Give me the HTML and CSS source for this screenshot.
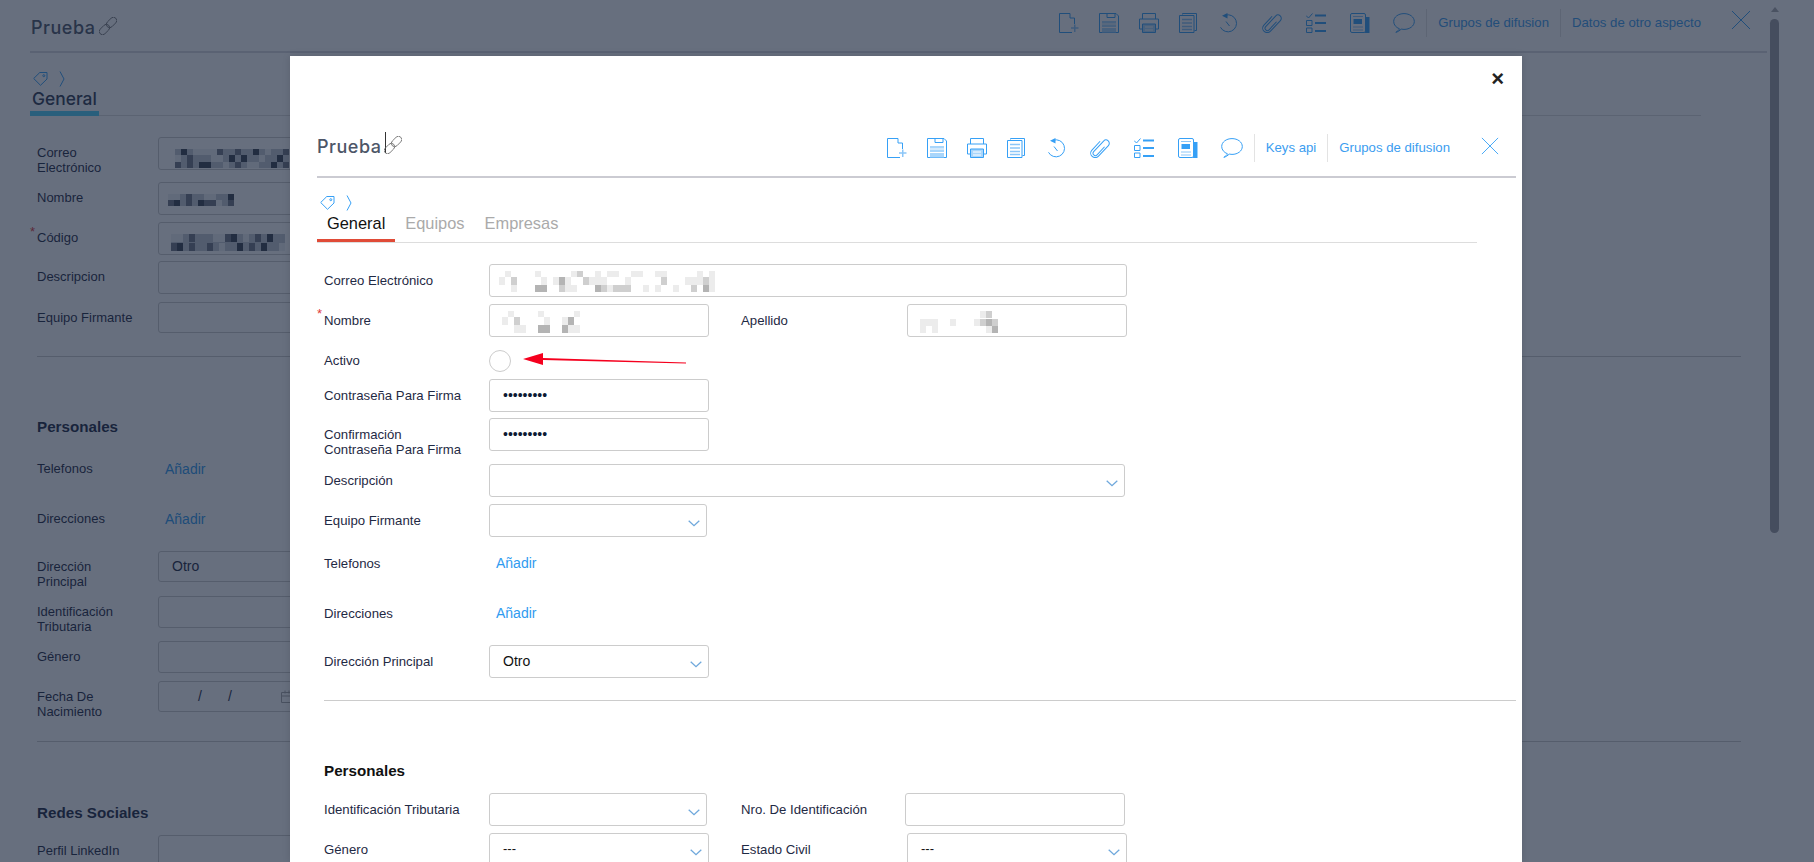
FILE: index.html
```html
<!doctype html>
<html lang="es">
  <head>
    <meta charset="UTF-8" />
    <title>Prueba</title>
    <link rel="stylesheet" href="styles.css">
  </head>
  <body>
    <svg class="defs" width="0" height="0">
      <symbol id="i-new" viewBox="0 0 20 20">
        <path d="M11 .5H.5v19H13M11 .5V5h4.500v6"/>
        <path class="soft" d="M12 15h7.500M15.750 11.500v7.500" stroke-width="1.500"/>
      </symbol>
      <symbol id="i-save" viewBox="0 0 20 20">
        <path d="M.5.5H17L19.500 3v16.500H.5z"/>
        <path d="M8 .5v4h8V.5"/>
        <rect class="fill" x="3" y="8" width="14" height="11.500"/>
        <path class="white" d="M3 11h14M3 14.500h14"/>
      </symbol>
      <symbol id="i-print" viewBox="0 0 20 20">
        <path d="M3.500 6V.5h13V6M.5 6h19v10h-3M3.500 16h-3V6"/>
        <rect class="fill" x="3.500" y="11" width="13" height="8.500"/>
        <path d="M3.500 11h13v8.500h-13z"/>
        <path class="white" d="M6 14h8M6 17h8"/>
      </symbol>
      <symbol id="i-copy" viewBox="0 0 20 20">
        <path d="M3.500 1.500V.5h14v17h-2"/>
        <path d="M.5 2.500h14.500v17H.5z"/>
        <path class="soft" d="M3 6.500h10M3 10h10M3 13.500h10M3 16.500h10" stroke-width="1.300"/>
      </symbol>
      <symbol id="i-history" viewBox="0 0 23 20">
        <path d="M6.500 2.200A8.500 8.500 0 1 1 1.500 14.300"/>
        <path class="solid" d="M3 2.800 8.500 0v5.500z"/>
        <path d="M7 8.500l3.500 4.500"/>
      </symbol>
      <symbol id="i-clip" viewBox="0 0 24 20">
        <g transform="rotate(43 10 10)">
          <path d="M10.500 5v11a2.300 2.300 0 0 1-4.600 0V1.500a3.300 3.300 0 0 1 6.600 0V16a4.500 4.500 0 0 1-9 0V4" transform="translate(2 1)"/>
        </g>
      </symbol>
      <symbol id="i-list" viewBox="0 0 24 20">
        <path d="M0 2.500 2.500 5 6.500.5"/>
        <path d="M.5 7.500h5.500v5H.5zM.5 15h5.500v4.500H.5z"/>
        <path d="M9 2.500h11M9 10h11M9 18h11" stroke-width="2"/>
      </symbol>
      <symbol id="i-news" viewBox="0 0 23 20">
        <path class="solid" d="M15 4h4.500v16H15z"/>
        <rect x=".5" y=".5" width="15" height="19" rx="1.500" fill="#fff"/>
        <path class="solid" d="M3.500 6h8.500v5H3.500z"/>
        <path class="soft" d="M3 3.500h10M3 14h10M3 17h10"/>
      </symbol>
      <symbol id="i-chat" viewBox="0 0 23 20">
        <path d="M6.500 15.800C3 14.500.7 11.800.7 8.500.7 4 5.300.6 11 .6s10.300 3.400 10.300 7.900-4.600 7.900-10.300 7.900c-1 0-1.900-.1-2.800-.3C6.800 17.500 5 18.800 2.800 19.300c1.800-1 3.200-2.300 3.700-3.500z"/>
      </symbol>
      <symbol id="i-close" viewBox="0 0 20 20">
        <path d="M1 1l18 18M19 1L1 19"/>
      </symbol>
      <symbol id="i-link" viewBox="0 0 18 18">
        <g transform="rotate(-45 9 9)">
          <rect x="-2" y="5.700" width="12" height="6.600" rx="3.300"/>
          <rect x="8" y="5.700" width="12" height="6.600" rx="3.300"/>
        </g>
      </symbol>
      <symbol id="i-tag" viewBox="0 0 15 15">
        <path d="M.7 7.500 6.800 1.500H14V8l-6.500 6.300z"/>
        <circle cx="10.800" cy="4.700" r="1"/>
      </symbol>
      <symbol id="i-chevron" viewBox="0 0 6 16">
        <path d="M1 .5 5 8l-4 7.500"/>
      </symbol>
      <symbol id="i-down" viewBox="0 0 12 7">
        <path d="M.7.7 6 5.700l5.300-5"/>
      </symbol>
    </svg>

    <div class="page">
      <div class="head head-page">
        <div class="title title-page">Prueba <svg class="ic-link"><use href="#i-link"/></svg></div>
        <div class="tools">
          <svg class="tool"><use href="#i-new"/></svg>
          <svg class="tool"><use href="#i-save"/></svg>
          <svg class="tool"><use href="#i-print"/></svg>
          <svg class="tool"><use href="#i-copy"/></svg>
          <svg class="tool w23"><use href="#i-history"/></svg>
          <svg class="tool w24"><use href="#i-clip"/></svg>
          <svg class="tool w24"><use href="#i-list"/></svg>
          <svg class="tool w23"><use href="#i-news"/></svg>
          <svg class="tool w23 tool-last"><use href="#i-chat"/></svg>
          <a class="tool-link">Grupos de difusion</a>
          <a class="tool-link">Datos de otro aspecto</a>
          <svg class="ic-close ic-close-page"><use href="#i-close"/></svg>
        </div>
      </div>
      <div class="crumb crumb-page">
        <svg class="ic-tag"><use href="#i-tag"/></svg>
        <svg class="ic-chevron"><use href="#i-chevron"/></svg>
      </div>
      <div class="tabs-page"><span class="tab-page">General</span></div>

      <div class="bg-form">
        <div class="bg-row h33 mb12">
          <label>Correo<br>Electrónico</label>
          <div class="bg-field">
            <svg class="mosaic" width="114" height="20">
              <rect width="114" height="19" fill="#c4c9d0"/>
              <path fill="#3b4250" d="M6 0h6v6H6zM78 0h6v6h-6zM54 6h6v7h-6zM66 6h6v7h-6zM102 6h6v7h-6zM24 13h12v6H24zM96 13h6v6h-6z"/>
              <path fill="#eef0f2" d="M0 6h6v7H0zM18 0h24v6H18zM36 6h12v7H36zM90 0h6v6h-6zM84 6h6v7h-6zM48 13h6v6h-6zM72 13h12v6H72z"/>
              <path fill="#707784" d="M12 6h6v7h-6zM0 13h6v6H0zM42 0h6v6h-6zM60 0h6v6h-6zM108 0h6v6h-6zM12 13h6v6h-6zM60 13h6v6h-6zM108 13h6v6h-6z"/>
            </svg>
          </div>
        </div>
        <div class="bg-row h33 mb7">
          <label>Nombre</label>
          <div class="bg-field">
            <svg class="mosaic mosaic-short" width="66" height="12">
              <rect width="66" height="12" fill="#c4c9d0"/>
              <path fill="#eef0f2" d="M0 0h12v6H0zM36 0h12v6H36zM48 6h6v6h-6z"/>
              <path fill="#707784" d="M18 0h6v6h-6zM0 6h6v6H0zM18 6h6v6h-6zM36 6h12v6H36zM60 6h6v6h-6z"/>
              <path fill="#3b4250" d="M60 0h6v6h-6zM6 6h6v6H6zM30 6h6v6h-6z"/>
            </svg>
          </div>
        </div>
        <div class="bg-row h33 mb6">
          <label class="req"><i>*</i>Código</label>
          <div class="bg-field">
            <svg class="mosaic mosaic-mid" width="114" height="17">
              <rect width="114" height="17" fill="#c4c9d0"/>
              <path fill="#eef0f2" d="M0 0h12v8H0zM42 0h12v8H42zM72 0h6v8h-6zM48 9h6v8h-6zM108 9h6v8h-6z"/>
              <path fill="#3b4250" d="M60 0h6v8h-6zM96 0h6v8h-6zM6 9h6v8H6zM66 9h6v8h-6zM90 9h6v8h-6z"/>
              <path fill="#707784" d="M18 0h6v8h-6zM54 0h6v8h-6zM84 0h6v8h-6zM0 9h6v8H0zM18 9h6v8h-6zM36 9h6v8h-6zM78 9h6v8h-6z"/>
            </svg>
          </div>
        </div>
        <div class="bg-row h33 mb8"><label>Descripcion</label><div class="bg-field"></div></div>
        <div class="bg-row h31"><label>Equipo Firmante</label><div class="bg-field"></div></div>
        <div class="bg-hr first-hr"></div>
        <h3 class="bg-head first-head">Personales</h3>
        <div class="bg-row h32 mb18"><label>Telefonos</label><a>Añadir</a></div>
        <div class="bg-row h32 mb16"><label>Direcciones</label><a>Añadir</a></div>
        <div class="bg-row h31 mb14"><label>Dirección<br>Principal</label><div class="bg-field bg-text">Otro</div></div>
        <div class="bg-row h32 mb13"><label>Identificación<br>Tributaria</label><div class="bg-field"></div></div>
        <div class="bg-row h32 mb8"><label>Género</label><div class="bg-field"></div></div>
        <div class="bg-row h31">
          <label>Fecha De<br>Nacimiento</label>
          <div class="bg-field bg-text bg-date">
            <span>/</span><span>/</span>
            <svg class="ic-cal" width="12" height="13"><path d="M.5 2.500h11v10H.5zM.5 6h11M4 .5v3M8 .5v3"/></svg>
          </div>
        </div>
        <div class="bg-hr second-hr"></div>
        <h3 class="bg-head">Redes Sociales</h3>
        <div class="bg-row h31"><label>Perfil LinkedIn</label><div class="bg-field"></div></div>
      </div>
    </div>

    <div class="backdrop"></div>
    <div class="scrollbar"><span class="scroll-arrow"></span><span class="scroll-thumb"></span></div>

    <div class="modal">
      <div class="modal-close">×</div>
      <div class="head">
        <div class="title">Prueba <span class="caret"></span><svg class="ic-link"><use href="#i-link"/></svg></div>
        <div class="tools">
          <svg class="tool"><use href="#i-new"/></svg>
          <svg class="tool"><use href="#i-save"/></svg>
          <svg class="tool"><use href="#i-print"/></svg>
          <svg class="tool"><use href="#i-copy"/></svg>
          <svg class="tool w23"><use href="#i-history"/></svg>
          <svg class="tool w24"><use href="#i-clip"/></svg>
          <svg class="tool w24"><use href="#i-list"/></svg>
          <svg class="tool w23"><use href="#i-news"/></svg>
          <svg class="tool w23 tool-last"><use href="#i-chat"/></svg>
          <a class="tool-link">Keys api</a>
          <a class="tool-link">Grupos de difusion</a>
          <svg class="ic-close"><use href="#i-close"/></svg>
        </div>
      </div>
      <div class="crumb">
        <svg class="ic-tag"><use href="#i-tag"/></svg>
        <svg class="ic-chevron"><use href="#i-chevron"/></svg>
      </div>
      <div class="tabs">
        <span class="tab active">General</span>
        <span class="tab">Equipos</span>
        <span class="tab">Empresas</span>
      </div>

      <div class="form">
        <div class="row">
          <label>Correo Electrónico</label>
          <div class="field w638">
            <svg class="mosaic" width="216" height="21">
              <path fill="#ececec" d="M6 0h6v6H6zM36 0h6v6h-6zM72 0h6v6h-6zM96 0h6v6h-6zM108 0h12v6h-12zM132 0h12v6h-12zM156 0h12v6h-12zM198 0h6v6h-6zM210 0h6v6h-6zM0 6h6v8H0zM42 6h6v8h-6zM54 6h6v8h-6zM66 6h6v8h-6zM90 6h18v8H90zM126 6h6v8h-6zM186 6h30v8h-30zM12 14h6v7h-6zM66 14h12v7H66zM108 14h6v7h-6zM144 14h6v7h-6zM156 14h6v7h-6zM174 14h6v7h-6zM210 14h6v7h-6z"/>
              <path fill="#cfcfcf" d="M78 0h6v6h-6zM12 6h6v8h-6zM84 6h6v8h-6zM162 6h6v8h-6zM204 6h6v8h-6zM60 14h6v7h-6zM102 14h6v7h-6zM114 14h12v7h-12zM126 14h6v7h-6zM192 14h6v7h-6z"/>
              <path fill="#b4b4b4" d="M60 6h6v8h-6zM36 14h12v7H36zM96 14h6v7h-6zM204 14h6v7h-6z"/>
            </svg>
          </div>
        </div>
        <div class="row">
          <label class="req"><i>*</i>Nombre</label>
          <div class="field w220">
            <svg class="mosaic mosaic-in" width="80" height="22">
              <path fill="#ececec" d="M6 0h6v6H6zM36 0h6v6h-6zM72 0h6v6h-6zM0 6h6v8H0zM60 6h6v8h-6zM12 14h12v8H12zM66 14h12v8H66zM42 6h6v8h-6z"/>
              <path fill="#cfcfcf" d="M12 6h6v8h-6zM42 14h6v8h-6z"/>
              <path fill="#b4b4b4" d="M60 14h6v8h-6zM66 6h6v8h-6zM36 14h12v8H36z"/>
            </svg>
          </div>
          <label class="label-2">Apellido</label>
          <div class="field w220">
            <svg class="mosaic mosaic-in" width="78" height="22">
              <path fill="#ececec" d="M60 0h6v7h-6zM0 8h18v7H0zM30 8h6v7h-6zM54 8h6v7h-6zM0 15h6v7H0zM12 15h6v7h-6zM66 15h6v7h-6z"/>
              <path fill="#cfcfcf" d="M66 0h6v7h-6zM60 8h6v7h-6zM72 8h6v7h-6z"/>
              <path fill="#b4b4b4" d="M72 15h6v7h-6zM66 8h6v7h-6z"/>
            </svg>
          </div>
        </div>
        <div class="row row-check">
          <label class="label-mid">Activo</label>
          <span class="check"></span>
          <svg class="arrow" width="163" height="12" viewBox="0 0 163 12">
            <path fill="#f5001e" d="M0 6 20 0v5L163 9.500v1L20 7v5z"/>
          </svg>
        </div>
        <div class="row tight">
          <label>Contraseña Para Firma</label>
          <div class="field w220 dots">•••••••••</div>
        </div>
        <div class="row row-two">
          <label>Confirmación<br>Contraseña Para Firma</label>
          <div class="field w220 dots">•••••••••</div>
        </div>
        <div class="row">
          <label>Descripción</label>
          <div class="field w636 select"><svg class="ic-down"><use href="#i-down"/></svg></div>
        </div>
        <div class="row">
          <label>Equipo Firmante</label>
          <div class="field w218 select"><svg class="ic-down"><use href="#i-down"/></svg></div>
        </div>
        <div class="row link-row"><label>Telefonos</label><a>Añadir</a></div>
        <div class="row link-row"><label>Direcciones</label><a>Añadir</a></div>
        <div class="row row-principal">
          <label>Dirección Principal</label>
          <div class="field w220 select">Otro<svg class="ic-down"><use href="#i-down"/></svg></div>
        </div>
        <div class="rule"></div>
        <h3 class="section">Personales</h3>
        <div class="row">
          <label>Identificación Tributaria</label>
          <div class="field w218 select"><svg class="ic-down"><use href="#i-down"/></svg></div>
          <label class="label-2 label-2b">Nro. De Identificación</label>
          <div class="field w220"></div>
        </div>
        <div class="row">
          <label>Género</label>
          <div class="field w220 select small">---<svg class="ic-down"><use href="#i-down"/></svg></div>
          <label class="label-2">Estado Civil</label>
          <div class="field w220 select small">---<svg class="ic-down"><use href="#i-down"/></svg></div>
        </div>
      </div>
    </div>
  </body>
</html>
```

FILE: styles.css
```css
* {
  box-sizing: border-box;
}
html,
body {
  margin: 0;
  height: 100%;
  overflow: hidden;
}
body {
  position: relative;
  background: #fff;
  font-family: "Liberation Sans", Arial, sans-serif;
  color: #1f2a44;
}
.defs {
  position: absolute;
}
svg {
  display: block;
  fill: none;
  stroke: currentColor;
  stroke-width: 1;
}
.fill {
  fill: #a9d6fb;
  stroke: none;
}
.soft {
  stroke: #8cc6f8;
}
.white {
  stroke: #fff;
}
.solid {
  fill: currentColor;
  stroke: none;
}

/* page under the backdrop */
.page {
  width: 1767px;
  height: 862px;
  padding-left: 30px;
}
.backdrop {
  position: absolute;
  inset: 0;
  background: rgba(21, 34, 57, 0.65);
}
.scrollbar {
  position: absolute;
  top: 0;
  left: 1770px;
  width: 9px;
}
.scroll-arrow {
  display: block;
  margin: 7px auto 0;
  width: 0;
  height: 0;
  border-left: 4.500px solid transparent;
  border-right: 4.500px solid transparent;
  border-bottom: 5px solid #4a5262;
}
.scroll-thumb {
  display: block;
  margin-top: 7px;
  height: 514px;
  border-radius: 5px;
  background: #454d5e;
}

/* header */
.head {
  display: flex;
  align-items: center;
  justify-content: space-between;
  height: 58px;
  border-bottom: 2px solid #cbcbd2;
}
.head-page {
  height: 53px;
  padding-bottom: 6px;
  padding-left: 1px;
  border-bottom-color: #dbdbe0;
}
.title {
  display: flex;
  align-items: center;
  font: 500 18px Inter, "Open Sans", sans-serif;
  letter-spacing: 0.5px;
  color: #4d5668;
  white-space: pre;
  margin-top: -3px;
}
.title-page {
  margin-top: 10px;
}
.caret {
  width: 1px;
  height: 21px;
  margin: -8px 0 0 -2px;
  background: #333;
}
.ic-link {
  width: 18px;
  height: 18px;
  color: #666;
  stroke-width: 0.8;
  margin: -4px 0 0 -2px;
}
.tools {
  display: flex;
  align-items: center;
  margin-left: auto;
  color: #36a0f6;
}
.tool {
  width: 20px;
  height: 20px;
  margin-right: 20px;
}
.w23 {
  width: 23px;
}
.w24 {
  width: 24px;
}
.tool-last {
  margin-right: 10px;
}
.tool-link {
  display: block;
  height: 28px;
  line-height: 28px;
  padding: 0 11px;
  border-left: 1px solid #e3e3e3;
  font-size: 13.200px;
  color: #3b9df0;
}
.ic-close {
  width: 18px;
  height: 18px;
  margin: -4px 17px 0 20px;
}
.ic-close-page {
  width: 20px;
  height: 20px;
  margin: -6px 16px 0 19px;
}
.crumb {
  display: flex;
  height: 18px;
  margin-top: 17px;
  padding-left: 3px;
  color: #36a0f6;
}
.crumb-page {
  margin-top: 18px;
}
.ic-tag {
  width: 15px;
  height: 15px;
  margin-right: 11px;
}
.ic-chevron {
  width: 6px;
  height: 16px;
}

/* background tabs and form */
.tabs-page {
  display: flex;
  width: 1671px;
  height: 27px;
  border-bottom: 1px solid #dcdcdc;
}
.tab-page {
  width: 69px;
  height: 27px;
  padding-left: 2px;
  font: 500 17.400px/20px Inter, sans-serif;
  color: #2f3a52;
  border-bottom: 5px solid #4fd0f8;
}
.bg-form {
  padding: 21px 0 0 7px;
  width: 1711px;
  font-size: 13px;
}
.bg-row {
  display: flex;
  align-items: flex-start;
  margin-bottom: 8px;
}
.bg-row label {
  position: relative;
  flex: none;
  width: 121px;
  padding-top: 9px;
  line-height: 14.500px;
}
.bg-row a {
  padding: 8px 0 0 7px;
  font-size: 14px;
  color: #2f9bf0;
}
.bg-field {
  flex: none;
  width: 500px;
  height: 100%;
  border: 1px solid #ccc;
  border-radius: 3px;
  padding: 9px 16px;
}
.h33 {
  height: 33px;
}
.h32 {
  height: 32px;
}
.h31 {
  height: 31px;
}
.mb6 {
  margin-bottom: 6px;
}
.mb7 {
  margin-bottom: 7px;
}
.mb8 {
  margin-bottom: 8px;
}
.mb12 {
  margin-bottom: 12px;
}
.mb13 {
  margin-bottom: 13px;
}
.mb14 {
  margin-bottom: 14px;
}
.mb16 {
  margin-bottom: 16px;
}
.mb18 {
  margin-bottom: 18px;
}
.bg-text {
  padding: 6px 13px;
  font-size: 14px;
}
.bg-date {
  display: flex;
  padding-left: 39px;
}
.bg-date span {
  margin-right: 26px;
}
.ic-cal {
  margin: 2px 0 0 23px;
  color: #aaa;
}
.mosaic-short {
  margin: 0 0 0 -7px;
}
.mosaic-mid {
  margin: -2px 0 0 -4px;
}
.bg-hr {
  height: 1px;
  background: #ccc;
}
.first-hr {
  margin-top: 23px;
}
.second-hr {
  margin-top: 29px;
}
.bg-head {
  margin: 62px 0 14px;
  font-size: 15.200px;
  line-height: 17px;
}
.first-head {
  margin: 61px 0 18px;
}

/* modal */
.modal {
  position: absolute;
  top: 56px;
  left: 290px;
  width: 1232px;
  height: 806px;
  padding-left: 27px;
  padding-right: 6px;
  background: #fff;
  box-shadow: 0 0 8px rgba(0, 0, 0, 0.12);
}
.modal-close {
  height: 64px;
  padding: 12px 12px 0 0;
  text-align: right;
  font: bold 22px/22px "Liberation Sans", sans-serif;
  color: #222;
}
.tabs {
  display: flex;
  height: 30px;
  margin-right: 39px;
  border-bottom: 1px solid #ddd;
}
.tab {
  padding: 0 10px;
  height: 29px;
  font-size: 16.400px;
  line-height: 20px;
  color: #aaa;
}
.tab.active {
  color: #111;
  border-bottom: 3px solid #e04b37;
}
.form {
  padding: 21px 0 0 7px;
  font-size: 13.200px;
}
.row {
  display: flex;
  align-items: flex-start;
  margin-bottom: 7px;
}
.row label {
  position: relative;
  flex: none;
  width: 165px;
  padding-top: 9px;
  line-height: 15px;
}
.req i {
  position: absolute;
  left: -7px;
  top: 3px;
  font-style: normal;
  color: #e03a3a;
  font-size: 13px;
  line-height: 13px;
}
.row .label-2 {
  width: 166px;
  margin-left: 32px;
}
.row .label-2b {
  width: 164px;
  margin-left: 34px;
}
.row .label-mid {
  padding-top: 3px;
}
.field {
  display: flex;
  align-items: center;
  justify-content: space-between;
  flex: none;
  height: 33px;
  padding: 0 9px;
  border: 1px solid #ccc;
  border-radius: 3px;
  background: #fff;
  font-size: 14px;
  color: #111;
}
.mosaic {
  margin-top: 2px;
  shape-rendering: crispEdges;
  stroke: none;
}
.mosaic-in {
  margin-left: 3px;
  margin-right: auto;
}
.w220 {
  width: 220px;
}
.w218 {
  width: 218px;
}
.w636 {
  width: 636px;
}
.w638 {
  width: 638px;
}
.select {
  padding: 0 6px 2px 13px;
}
.select .ic-down:only-child {
  margin-left: auto;
}
.ic-down {
  flex: none;
  width: 12px;
  height: 7px;
  margin-top: 7px;
  color: #6fa8dc;
  stroke-width: 1.300;
}
.small {
  font-size: 13px;
}
.dots {
  padding-left: 13px;
  padding-bottom: 1px;
  color: #0d1a33;
}
.row-check {
  height: 22px;
  margin-top: 13px;
}
.check {
  flex: none;
  width: 22px;
  height: 22px;
  border: 1px solid #ccc;
  border-radius: 50%;
}
.arrow {
  margin: 3px 0 0 12px;
  stroke: none;
}
.tight {
  margin-bottom: 6px;
}
.row-two {
  height: 39px;
}
.link-row {
  height: 43px;
}
.link-row label {
  padding-top: 12px;
}
.link-row a {
  padding: 12px 0 0 7px;
  font-size: 14px;
  line-height: 15px;
  color: #2f9bf0;
}
.row-principal {
  margin-top: 8px;
}
.rule {
  height: 1px;
  margin-top: 22px;
  background: #ccc;
}
.section {
  margin: 61px 0 14px;
  font-size: 15.200px;
  line-height: 17px;
  color: #111;
}
```
